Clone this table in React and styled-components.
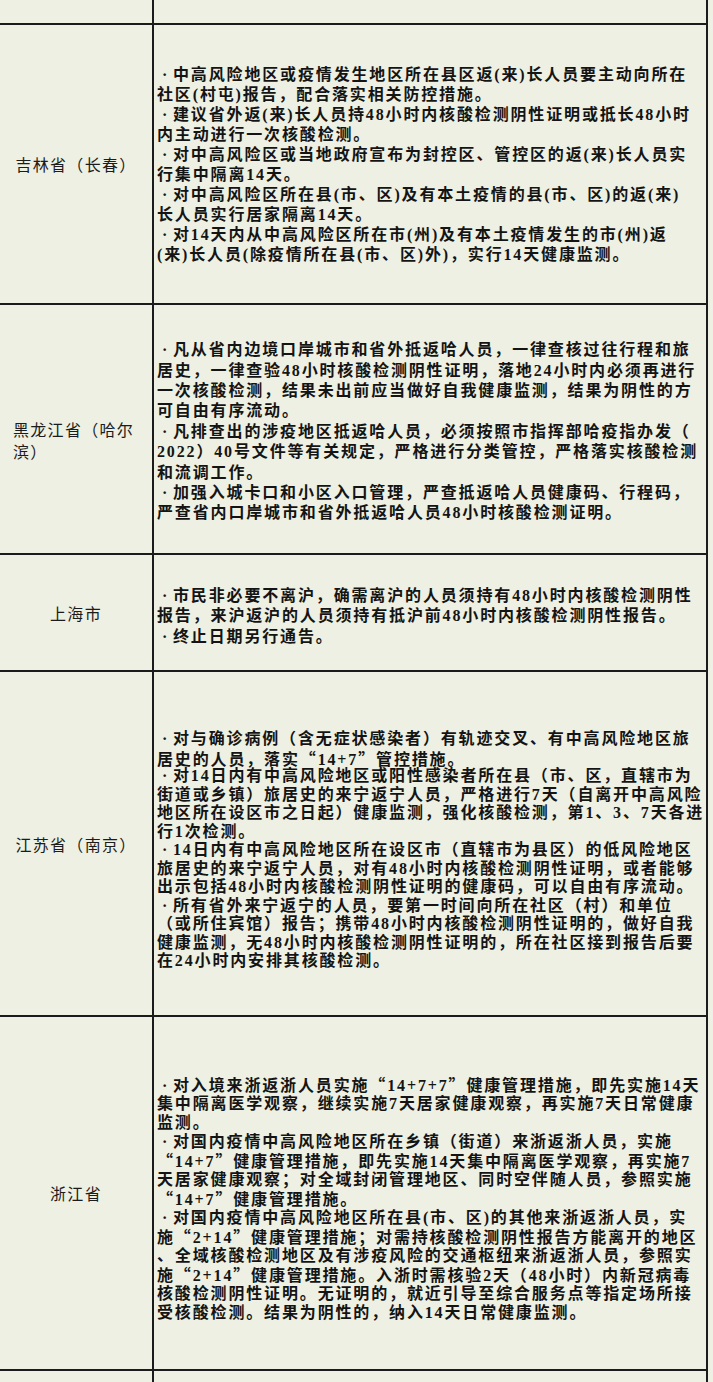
import React from 'react';
import styled, { createGlobalStyle } from 'styled-components';

const Global = createGlobalStyle`
  html, body {
    margin: 0;
    padding: 0;
    background: #edf0e2;
  }
  #root {
    width: 713px;
    height: 1382px;
    overflow: hidden;
  }
`;

const Page = styled.div`
  width: 713px;
  height: 1382px;
  background: #edf0e2;
  overflow: hidden;
`;

const Table = styled.div`
  width: 708px;
  display: flex;
  flex-direction: column;
`;

const Row = styled.div`
  display: grid;
  grid-template-columns: 152px minmax(0, 1fr);
  height: ${(p) => p.$h}px;
  border-bottom: 2px solid #1b1b1b;
  box-sizing: content-box;
  &:last-child {
    border-bottom: none;
  }
`;

const LabelCell = styled.div`
  display: flex;
  flex-direction: column;
  justify-content: center;
  align-items: ${(p) => (p.$left ? 'flex-start' : 'center')};
  padding-left: ${(p) => (p.$left ? 13 : 0)}px;
  padding-top: ${(p) => p.$shift || 0}px;
  box-sizing: border-box;
  font-family: "Noto Sans CJK SC", sans-serif;
  font-size: 16px;
  line-height: 22px;
  letter-spacing: 1.3px;
  color: #1c1c1c;
`;

const TextCell = styled.div`
  border-left: 2px solid #1b1b1b;
  border-right: 2px solid #1b1b1b;
  display: flex;
  flex-direction: column;
  justify-content: center;
  padding-left: 3px;
  padding-top: ${(p) => p.$shift || 0}px;
  box-sizing: border-box;
  overflow: hidden;
  font-family: "Liberation Serif", "Noto Sans CJK SC", serif;
  font-weight: 700;
  font-size: 16px;
  letter-spacing: 1.85px;
  color: #141414;
`;

const Line = styled.div`
  white-space: nowrap;
  height: ${(p) => p.$lh}px;
  line-height: ${(p) => p.$lh}px;
`;

const Bullet = styled.span`
  display: inline-block;
  width: 16px;
  padding-left: 5px;
  box-sizing: border-box;
`;

const Quote = styled.span`
  font-family: "Noto Sans CJK SC", sans-serif;
`;

const rows = [
  { h: 23, label: [], lines: [] },
  {
    h: 278,
    lh: 20,
    shift: 2,
    label: ['吉林省（长春）'],
    lines: [
      '·中高风险地区或疫情发生地区所在县区返(来)长人员要主动向所在',
      '社区(村屯)报告，配合落实相关防控措施。',
      '·建议省外返(来)长人员持48小时内核酸检测阴性证明或抵长48小时',
      '内主动进行一次核酸检测。',
      '·对中高风险区或当地政府宣布为封控区、管控区的返(来)长人员实',
      '行集中隔离14天。',
      '·对中高风险区所在县(市、区)及有本土疫情的县(市、区)的返(来)',
      '长人员实行居家隔离14天。',
      '·对14天内从中高风险区所在市(州)及有本土疫情发生的市(州)返',
      '(来)长人员(除疫情所在县(市、区)外)，实行14天健康监测。',
    ],
  },
  {
    h: 248,
    lh: 20.4,
    shift: 6,
    label: ['黑龙江省（哈尔', '滨）'],
    left: true,
    labelShift: 22,
    lines: [
      '·凡从省内边境口岸城市和省外抵返哈人员，一律查核过往行程和旅',
      '居史，一律查验48小时核酸检测阴性证明，落地24小时内必须再进行',
      '一次核酸检测，结果未出前应当做好自我健康监测，结果为阴性的方',
      '可自由有序流动。',
      '·凡排查出的涉疫地区抵返哈人员，必须按照市指挥部哈疫指办发（',
      '2022）40号文件等有关规定，严格进行分类管控，严格落实核酸检测',
      '和流调工作。',
      '·加强入城卡口和小区入口管理，严查抵返哈人员健康码、行程码，',
      '严查省内口岸城市和省外抵返哈人员48小时核酸检测证明。',
    ],
  },
  {
    h: 115,
    lh: 20.5,
    shift: 8,
    label: ['上海市'],
    lines: [
      '·市民非必要不离沪，确需离沪的人员须持有48小时内核酸检测阴性',
      '报告，来沪返沪的人员须持有抵沪前48小时内核酸检测阴性报告。',
      '·终止日期另行通告。',
    ],
  },
  {
    h: 343,
    lh: 18.5,
    shift: 14,
    label: ['江苏省（南京）'],
    lines: [
      '·对与确诊病例（含无症状感染者）有轨迹交叉、有中高风险地区旅',
      '居史的人员，落实“14+7”管控措施。',
      '·对14日内有中高风险地区或阳性感染者所在县（市、区，直辖市为',
      '街道或乡镇）旅居史的来宁返宁人员，严格进行7天（自离开中高风险',
      '地区所在设区市之日起）健康监测，强化核酸检测，第1、3、7天各进',
      '行1次检测。',
      '·14日内有中高风险地区所在设区市（直辖市为县区）的低风险地区',
      '旅居史的来宁返宁人员，对有48小时内核酸检测阴性证明，或者能够',
      '出示包括48小时内核酸检测阴性证明的健康码，可以自由有序流动。',
      '·所有省外来宁返宁的人员，要第一时间向所在社区（村）和单位',
      '（或所住宾馆）报告；携带48小时内核酸检测阴性证明的，做好自我',
      '健康监测，无48小时内核酸检测阴性证明的，所在社区接到报告后要',
      '在24小时内安排其核酸检测。',
    ],
  },
  {
    h: 352,
    lh: 19,
    shift: 10,
    label: ['浙江省'],
    lines: [
      '·对入境来浙返浙人员实施“14+7+7”健康管理措施，即先实施14天',
      '集中隔离医学观察，继续实施7天居家健康观察，再实施7天日常健康',
      '监测。',
      '·对国内疫情中高风险地区所在乡镇（街道）来浙返浙人员，实施',
      '“14+7”健康管理措施，即先实施14天集中隔离医学观察，再实施7',
      '天居家健康观察；对全域封闭管理地区、同时空伴随人员，参照实施',
      '“14+7”健康管理措施。',
      '·对国内疫情中高风险地区所在县(市、区)的其他来浙返浙人员，实',
      '施“2+14”健康管理措施；对需持核酸检测阴性报告方能离开的地区',
      '、全域核酸检测地区及有涉疫风险的交通枢纽来浙返浙人员，参照实',
      '施“2+14”健康管理措施。入浙时需核验2天（48小时）内新冠病毒',
      '核酸检测阴性证明。无证明的，就近引导至综合服务点等指定场所接',
      '受核酸检测。结果为阴性的，纳入14天日常健康监测。',
    ],
  },
  { h: 40, label: [], lines: [] },
];

function renderQuotes(text) {
  return text.split(/([“”])/).map((part, k) =>
    part === '“' || part === '”' ? <Quote key={k}>{part}</Quote> : part
  );
}

function TextLine({ text, lh }) {
  if (text.startsWith('·')) {
    return (
      <Line $lh={lh}>
        <Bullet>·</Bullet>
        {renderQuotes(text.slice(1))}
      </Line>
    );
  }
  return <Line $lh={lh}>{renderQuotes(text)}</Line>;
}

export default function App() {
  return (
    <Page>
      <Global />
      <Table>
        {rows.map((r, i) => (
          <Row key={i} $h={r.h}>
            <LabelCell $left={r.left} $shift={r.labelShift}>
              {r.label.map((l, j) => (
                <div key={j}>{l}</div>
              ))}
            </LabelCell>
            <TextCell $shift={r.shift}>
              {r.lines.map((t, j) => (
                <TextLine key={j} text={t} lh={r.lh} />
              ))}
            </TextCell>
          </Row>
        ))}
      </Table>
    </Page>
  );
}
